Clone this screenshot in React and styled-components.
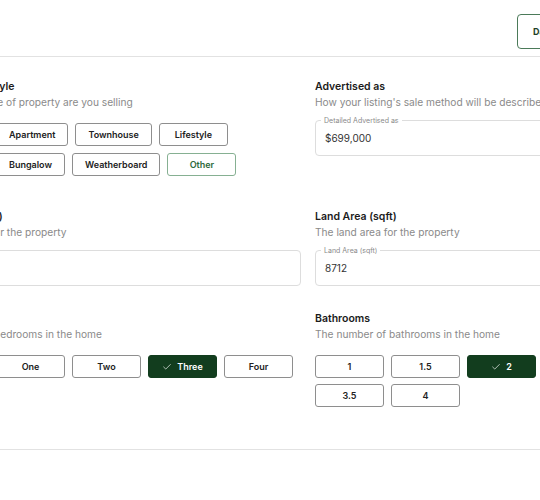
import styled, { createGlobalStyle } from "styled-components";
import { Check } from "lucide-react";

const GlobalStyle = createGlobalStyle`
  body {
    margin: 0;
    background: #ffffff;
    overflow: hidden;
    font-family: Inter, "Noto Sans", "Liberation Sans", sans-serif;
  }
`;

const chipTones = {
  default: { bg: "#ffffff", border: "#8e8e8e", color: "#222222" },
  selected: { bg: "#123d1e", border: "#123d1e", color: "#ffffff" },
  accent: { bg: "#ffffff", border: "#86b092", color: "#2f6a3d" },
};

const Viewport = styled.div`
  width: 540px;
  overflow: hidden;
`;

const Canvas = styled.div`
  width: 808px;
  margin-left: -96px;
`;

const Header = styled.header`
  display: flex;
  align-items: center;
  justify-content: space-between;
  padding: 14px 16px 7px;
  border-bottom: 1px solid #e2e2e2;
`;

const PageTitle = styled.h1`
  margin: 0;
  font-size: 12px;
  font-weight: 600;
  color: #1b1b1b;
`;

const Actions = styled.div`
  display: flex;
  gap: 8px;
  width: 179px;
`;

const ActionButton = styled.button`
  height: 35px;
  padding: 0 15px;
  border-radius: 4px;
  font-family: inherit;
  font-size: 9px;
  font-weight: 700;
  white-space: nowrap;
  border: 1.5px solid #4b7a59;
  background: ${(p) => (p.$filled ? "#123d1e" : "#ffffff")};
  color: ${(p) => (p.$filled ? "#ffffff" : "#1e3f28")};
`;

const Form = styled.div`
  display: grid;
  grid-template-columns: 381px 381px;
  column-gap: 14px;
  row-gap: 26px;
  padding: 23px 16px 34px;
  border-bottom: 1px solid #e2e2e2;
`;

const Field = styled.div`
  display: flex;
  flex-direction: column;
`;

const Label = styled.div`
  font-size: 10.5px;
  line-height: 14px;
  font-weight: 600;
  color: #1b1b1b;
`;

const Hint = styled.div`
  margin-top: 1px;
  font-size: 10.2px;
  line-height: 15px;
  color: #8a8a8a;
  white-space: nowrap;
`;

const ChipStack = styled.div`
  display: flex;
  flex-direction: column;
  gap: 7px;
  margin: 13px 0 8px;
`;

const ChipRow = styled.div`
  display: flex;
  gap: 7px;
`;

const ChipGroup = styled.div`
  display: flex;
  flex-wrap: wrap;
  column-gap: 7px;
  row-gap: 6px;
  margin: 13px 0 8px;
`;

const Chip = styled.button`
  display: inline-flex;
  align-items: center;
  justify-content: center;
  gap: 5px;
  min-width: 69px;
  height: 23px;
  padding: 0 12px;
  border: 1px solid ${(p) => chipTones[p.$tone].border};
  border-radius: 3px;
  background: ${(p) => chipTones[p.$tone].bg};
  color: ${(p) => chipTones[p.$tone].color};
  font-family: inherit;
  font-size: 9px;
  font-weight: 600;
  white-space: nowrap;
`;

const InputBox = styled.div`
  position: relative;
  display: flex;
  align-items: center;
  height: 34px;
  margin-top: 10px;
  padding: 0 9px;
  border: 1px solid #dddddd;
  border-radius: 4px;
  font-size: 10px;
  color: #333333;
`;

const Notch = styled.span`
  position: absolute;
  top: -5px;
  left: 5px;
  padding: 0 3px;
  background: #ffffff;
  font-size: 7px;
  line-height: 9px;
  color: #8a8a8a;
`;

const styleRows = [
  ["House", "Apartment", "Townhouse", "Lifestyle"],
  ["Unit", "Bungalow", "Weatherboard", "Other"],
];

const bedrooms = ["Studio", "One", "Two", "Three", "Four"];
const bathrooms = ["1", "1.5", "2", "2.5", "3", "3.5", "4"];

function ChipOption({ label, tone = "default" }) {
  return (
    <Chip $tone={tone}>
      {tone === "selected" && <Check size={10} strokeWidth={1.6} />}
      {label}
    </Chip>
  );
}

function TextField({ legend, value }) {
  return (
    <InputBox>
      <Notch>{legend}</Notch>
      {value}
    </InputBox>
  );
}

export default function App() {
  return (
    <Viewport>
      <GlobalStyle />
      <Canvas>
        <Header>
          <PageTitle>Listing</PageTitle>
          <Actions>
            <ActionButton>Dashboard</ActionButton>
            <ActionButton $filled>Publish</ActionButton>
          </Actions>
        </Header>

        <Form>
          <Field>
            <Label>Architectural Style</Label>
            <Hint>Tell us what style of property are you selling</Hint>
            <ChipStack>
              {styleRows.map((row, i) => (
                <ChipRow key={i}>
                  {row.map((s) => (
                    <ChipOption key={s} label={s} tone={s === "Other" ? "accent" : "default"} />
                  ))}
                </ChipRow>
              ))}
            </ChipStack>
          </Field>

          <Field>
            <Label>Advertised as</Label>
            <Hint>How your listing's sale method will be described to buyers</Hint>
            <TextField legend="Detailed Advertised as" value="$699,000" />
          </Field>

          <Field>
            <Label>Floor Area (sqft)</Label>
            <Hint>The floor area for the property</Hint>
            <TextField legend="Floor Area (sqft)" value="" />
          </Field>

          <Field>
            <Label>Land Area (sqft)</Label>
            <Hint>The land area for the property</Hint>
            <TextField legend="Land Area (sqft)" value="8712" />
          </Field>

          <Field>
            <Label>Bedrooms</Label>
            <Hint>The number of bedrooms in the home</Hint>
            <ChipGroup>
              {bedrooms.map((b) => (
                <ChipOption key={b} label={b} tone={b === "Three" ? "selected" : "default"} />
              ))}
            </ChipGroup>
          </Field>

          <Field>
            <Label>Bathrooms</Label>
            <Hint>The number of bathrooms in the home</Hint>
            <ChipGroup>
              {bathrooms.map((b) => (
                <ChipOption key={b} label={b} tone={b === "2" ? "selected" : "default"} />
              ))}
            </ChipGroup>
          </Field>
        </Form>
      </Canvas>
    </Viewport>
  );
}
